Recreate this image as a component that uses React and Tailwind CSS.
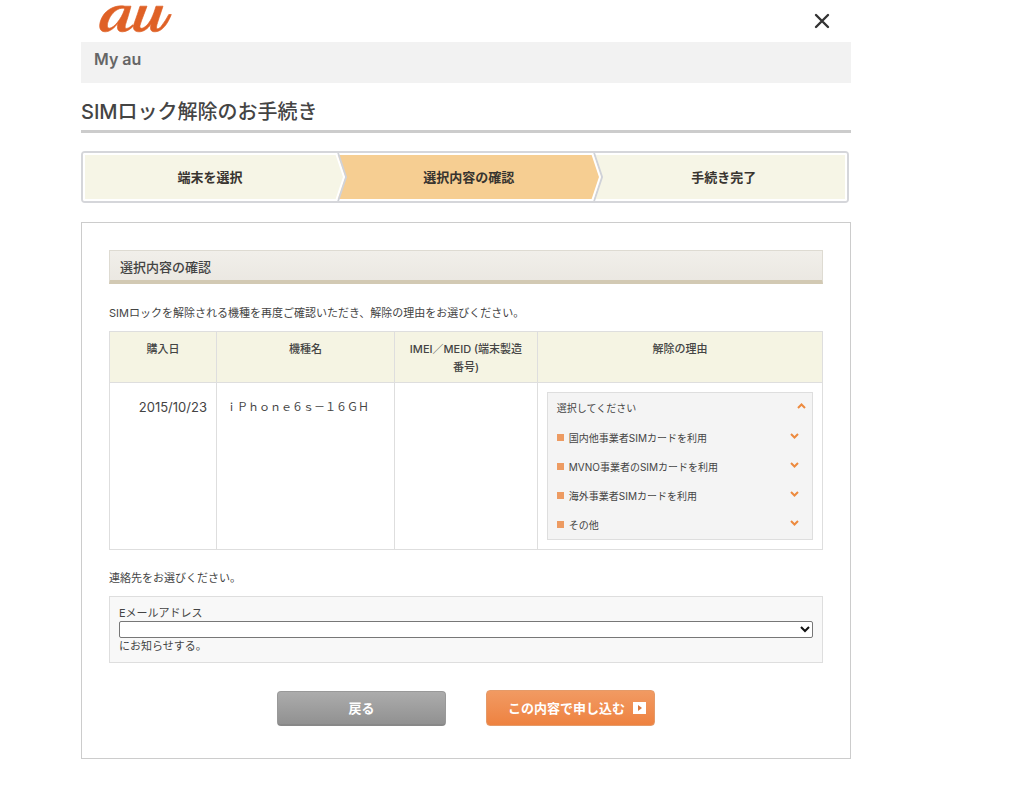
import React from "react";

const reasons = [
  "国内他事業者SIMカードを利用",
  "MVNO事業者のSIMカードを利用",
  "海外事業者SIMカードを利用",
  "その他",
];

function Logo() {
  return (
    <svg role="img" aria-label="au" viewBox="0 0 76 32" className="block h-8 w-[76px]" fill="#df6126" stroke="#df6126" strokeWidth="0.700" strokeLinejoin="round">
      <path d="M27 4.200 C18 2.500 9 7 4.500 14.500 C.3 22 .5 29.800 7 29.800 C12 29.800 16.500 26 20 21 C18.700 26.500 19.500 29.800 24.500 29.800 C28.500 29.800 32 27.500 35.500 24 L34.800 22.800 C31.500 25.800 28.800 27 27.600 26.200 C26.400 25.200 28 21 29.600 16 L33 4.200 Z M25 6.200 C26.500 6.200 26.700 6.800 26.200 8.300 C23.500 16.500 16 26.200 11.300 26.200 C8.200 26.200 9 20.500 12.200 14.800 C15.500 9.500 20.500 6 25 6.200 Z" />
      <path d="M42 4.200 L49 4.200 C46.500 11 42.800 20 42 23.600 C41.300 27 43.800 27 47 24.800 C52.500 20.800 55.500 12.500 58 4.200 L65 4.200 C62.500 12 59.500 20 58.600 24.200 C58 27.600 60.500 27.600 63 24.600 C66 20.800 68.500 16.800 70.800 12.500 L73.300 12.500 C70 21 64.500 29.800 57 29.800 C52 29.800 51.900 26.500 53.200 22 C49.500 27 45.500 29.800 41 29.800 C35.500 29.800 34.300 26 36.500 20.500 C38.500 15 40.500 9 42 4.200 Z" />
    </svg>
  );
}

function Steps() {
  return (
    <ol className="mr-[2px] mt-[18px] grid h-[52px] grid-cols-[33%_35%_32%] overflow-hidden rounded-sm border-2 border-[#d5d6da] bg-[#f6f5e6] text-[13px] font-bold text-[#38342f]">
      <li className="flex items-center justify-center border-2 border-r-0 border-white">端末を選択</li>
      <li aria-current="step" className="flex min-w-0 items-stretch">
        <Chevron left="#f6f5e6" right="#f6ce92" />
        <span className="flex flex-1 items-center justify-center border-y-2 border-white bg-[#f6ce92]">
          選択内容の確認
        </span>
        <Chevron left="#f6ce92" right="#f6f5e6" />
      </li>
      <li className="flex items-center justify-center border-2 border-l-0 border-white">手続き完了</li>
    </ol>
  );
}

function Chevron({ left, right }) {
  return (
    <svg aria-hidden="true" viewBox="0 0 12 48" preserveAspectRatio="none" className="h-full w-3 shrink-0">
      <rect width="12" height="48" fill="#fff" />
      <rect y="2" width="12" height="44" fill={right} />
      <path d="M0 2 L2 2 L10 24 L2 46 L0 46 Z" fill={left} />
      <path d="M3 0 L11 24 L3 48" fill="none" stroke="#d0d2d8" strokeWidth="2" />
      <path d="M1 0 L9 24 L1 48" fill="none" stroke="#fff" strokeWidth="2" />
    </svg>
  );
}

function Arrow({ up = false }) {
  return (
    <svg aria-hidden="true" viewBox="0 0 9 6" className="mb-1 h-[6px] w-[9px] shrink-0" fill="none" stroke="#ed8a3e" strokeWidth="2">
      <path d={up ? "M1 5 L4.500 1.500 L8 5" : "M1 1 L4.500 4.500 L8 1"} />
    </svg>
  );
}

const th = "border border-[#dedede] bg-[#f5f4e3] px-[11px] pt-2 pb-[6px] align-top font-medium leading-[18px]";
const td = "border border-[#dedede] align-top";

export default function App() {
  return (
    <div className="min-h-screen bg-white pb-12 pl-[81px] font-['Inter','Noto_Sans_CJK_JP',sans-serif] text-[11px] leading-4 text-[#444]">
      <div className="w-full max-w-[770px]">
        <header className="flex h-[42px] items-start justify-between pl-[17px] pr-5">
          <a href="#" className="mt-[2px]">
            <Logo />
          </a>
          <button type="button" aria-label="閉じる" className="mt-[13px]">
            <svg aria-hidden="true" viewBox="0 0 18 16" className="h-4 w-[18px]" stroke="#333" strokeWidth="2.400" strokeLinecap="round">
              <path d="M3 2 L15 14 M15 2 L3 14" />
            </svg>
          </button>
        </header>
        <nav className="h-[41px] bg-[#f2f2f2] px-[13px] pt-[5px]">
          <a href="#" className="text-base font-semibold leading-6 text-[#666]">My au</a>
        </nav>
        <h1 className="mt-[17px] border-b-[3px] border-[#ccc] pb-[5px] text-xl font-medium leading-[25px] text-[#444]">
          SIMロック解除のお手続き
        </h1>
        <Steps />
        <main className="mt-[19px] border border-[#ccc] px-[27px] pb-8 pt-[27px]">
          <h2 className="flex h-[34px] items-center border border-b-4 border-[#dedbd2] border-b-[#d2c9b3] bg-linear-to-b from-[#f1efea] to-[#ebe8e2] px-[10px] pt-[3px] text-[13px] font-medium">
            選択内容の確認
          </h2>
          <p className="mt-[21px]">SIMロックを解除される機種を再度ご確認いただき、解除の理由をお選びください。</p>
          <table className="mt-[10px] w-full table-fixed border-collapse">
            <colgroup>
              <col className="w-[15%]" />
              <col className="w-[25%]" />
              <col className="w-[20%]" />
              <col className="w-[40%]" />
            </colgroup>
            <thead>
              <tr>
                <th scope="col" className={th}>購入日</th>
                <th scope="col" className={th}>機種名</th>
                <th scope="col" className={th}>IMEI／MEID (端末製造番号)</th>
                <th scope="col" className={th}>解除の理由</th>
              </tr>
            </thead>
            <tbody>
              <tr>
                <td className={`${td} px-[9px] pt-4 text-right text-[13px] leading-4`}>2015/10/23</td>
                <td className={`${td} px-[9px] pt-4`}>ｉＰｈｏｎｅ６ｓ－１６ＧＨ</td>
                <td className={td}></td>
                <td className={`${td} p-[9px]`}>
                  <div className="border border-[#dedede] bg-[#f4f4f4] text-[10px]">
                    <button type="button" aria-expanded="true" className="flex h-[30px] w-full items-center justify-between pl-[9px] pr-[6px]">
                      選択してください
                      <Arrow up />
                    </button>
                    <ul>
                      {reasons.map((reason) => (
                        <li key={reason}>
                          <button type="button" className="flex h-[29px] w-full items-center gap-[5px] pl-[9px] pr-[13px]">
                            <span className="size-[7px] bg-[#ed9b62]" />
                            <span className="flex-1 text-left">{reason}</span>
                            <Arrow />
                          </button>
                        </li>
                      ))}
                    </ul>
                  </div>
                </td>
              </tr>
            </tbody>
          </table>
          <p className="mt-5">連絡先をお選びください。</p>
          <div className="mt-[10px] border border-[#dedede] bg-[#f8f8f8] px-[9px] pb-2 pt-[8px]">
            <label htmlFor="email" className="block">Eメールアドレス</label>
            <div className="grid items-center">
              <select id="email" className="col-start-1 row-start-1 h-[17px] w-full appearance-none rounded-[2px] border border-[#777] bg-white pr-5" />
              <svg aria-hidden="true" viewBox="0 0 10 7" className="pointer-events-none col-start-1 row-start-1 mr-[3px] h-[7px] w-[10px] justify-self-end" fill="none" stroke="#111" strokeWidth="2">
                <path d="M1 1 L5 5 L9 1" />
              </svg>
            </div>
            <p>にお知らせする。</p>
          </div>
          <div className="mt-[27px] flex items-center justify-center gap-10 text-[13px] font-bold text-white">
            <button type="button" className="h-[35px] w-[169px] rounded border border-[#999] border-b-2 border-b-[#888] bg-linear-to-b from-[#acacac] to-[#919191]">
              戻る
            </button>
            <button type="button" className="flex h-9 w-[169px] items-center justify-end gap-2 rounded border border-[#e59a68] bg-linear-to-b from-[#f19a62] to-[#ee8240] pr-2">
              この内容で申し込む
              <svg aria-hidden="true" viewBox="0 0 13 12" className="h-3 w-[13px]">
                <rect width="13" height="12" fill="#fff" />
                <path d="M5 3 L9 6 L5 9 Z" fill="#d9773d" />
              </svg>
            </button>
          </div>
        </main>
      </div>
    </div>
  );
}
